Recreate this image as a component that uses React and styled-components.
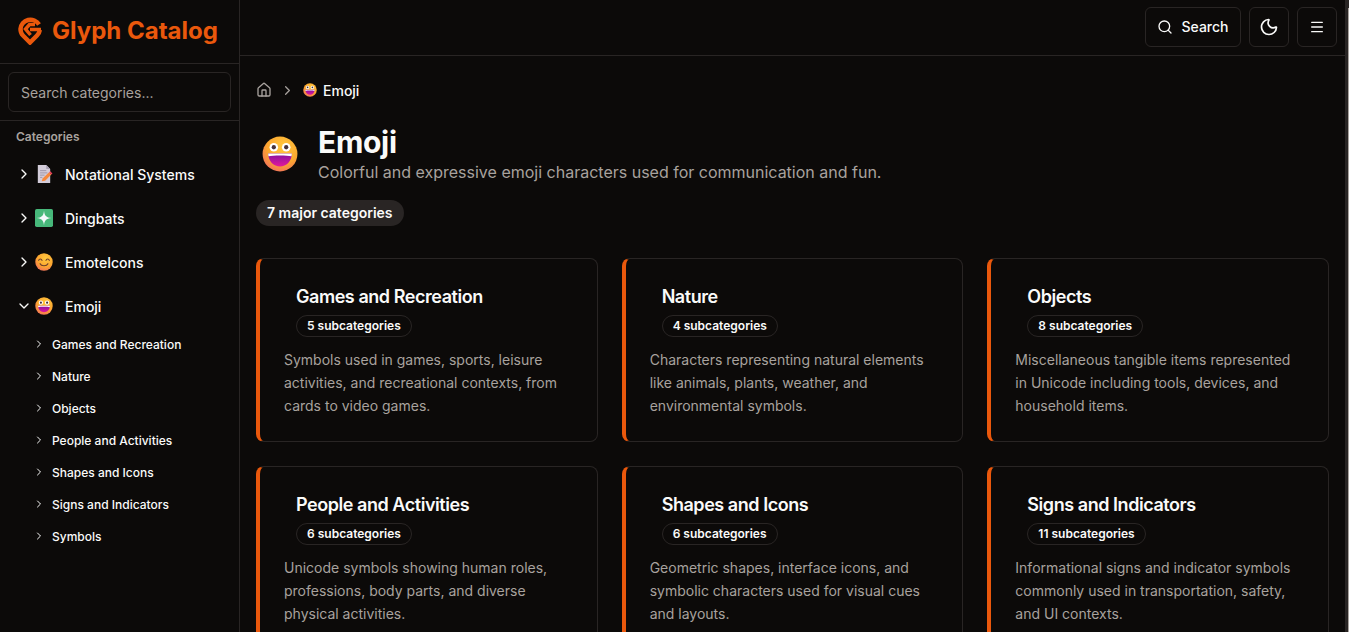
import styled, { createGlobalStyle } from "styled-components";
import { ChevronDown, ChevronRight, House, Menu, Moon, Search } from "lucide-react";

const GlobalStyle = createGlobalStyle`
  * {
    box-sizing: border-box;
  }
  html,
  body {
    margin: 0;
    height: 100%;
    background: #0c0a09;
    color: #fafaf9;
    font-family: Inter, "Liberation Sans", sans-serif;
  }
`;

const Shell = styled.div`
  display: flex;
  height: 100vh;
  overflow: hidden;
`;

const Sidebar = styled.aside`
  flex: 0 0 240px;
  border-right: 1px solid #292524;
  display: flex;
  flex-direction: column;
`;

const Brand = styled.div`
  height: 64px;
  padding: 17px 0 0 18px;
  display: flex;
  align-items: flex-start;
  gap: 10px;
  border-bottom: 1px solid #292524;
`;

const BrandName = styled.span`
  font-size: 24px;
  line-height: 28px;
  font-weight: 700;
  color: #ea580c;
`;

const FilterBox = styled.div`
  padding: 8px;
  border-bottom: 1px solid #292524;
`;

const FilterInput = styled.input`
  display: block;
  width: 100%;
  height: 40px;
  padding: 0 12px;
  background: transparent;
  border: 1px solid #292524;
  border-radius: 6px;
  font: 400 14px Inter, sans-serif;
  color: #fafaf9;
  &::placeholder {
    color: #a8a29e;
    opacity: 1;
  }
`;

const SectionLabel = styled.div`
  height: 31px;
  padding-left: 16px;
  font-size: 12px;
  font-weight: 600;
  line-height: 31px;
  color: #a8a29e;
`;

const CategoryRow = styled.div`
  height: 44px;
  padding-left: 16px;
  display: flex;
  align-items: center;
  font-size: 14px;
  font-weight: 500;
`;

const CategoryEmoji = styled.span`
  display: flex;
  margin-left: 3px;
  margin-right: 12px;
`;

const SubRow = styled.div`
  height: 32px;
  padding-left: 33px;
  display: flex;
  align-items: center;
  gap: 7px;
  font-size: 12px;
  font-weight: 500;
`;

const Main = styled.main`
  flex: 1;
  min-width: 0;
  overflow-y: auto;
`;

const ScrollRail = styled.div`
  flex: 0 0 4px;
  display: flex;
  justify-content: flex-end;
  padding-top: 8px;
  background: #292524;
`;

const ScrollThumb = styled.div`
  width: 1px;
  background: #a8a29e;
`;

const TopBar = styled.header`
  position: sticky;
  top: 0;
  height: 56px;
  padding: 7px 8px;
  display: flex;
  justify-content: flex-end;
  gap: 8px;
  background: #0c0a09;
  border-bottom: 1px solid #292524;
`;

const ToolButton = styled.button`
  height: 40px;
  width: ${(p) => (p.$wide ? "96px" : "40px")};
  padding: 0 0 1px;
  display: flex;
  align-items: center;
  justify-content: center;
  gap: 8px;
  background: transparent;
  border: 1px solid #292524;
  border-radius: 6px;
  color: #fafaf9;
  font: 500 14px Inter, sans-serif;
`;

const Content = styled.div`
  padding: 24px 16px;
`;

const Crumbs = styled.nav`
  height: 20px;
  display: flex;
  align-items: center;
  gap: 8px;
  font-size: 14px;
  font-weight: 500;
  color: #a8a29e;
`;

const CrumbCurrent = styled.span`
  display: flex;
  align-items: center;
  gap: 6px;
  color: #fafaf9;
`;

const Hero = styled.div`
  margin-top: 24px;
  display: flex;
  align-items: center;
  gap: 14px;
`;

const HeroEmoji = styled.div`
  flex: 0 0 48px;
  display: flex;
  justify-content: center;
`;

const HeroTitle = styled.h1`
  margin: 0;
  font-size: 30px;
  line-height: 36px;
  font-weight: 700;
  letter-spacing: -0.01em;
`;

const HeroText = styled.p`
  margin: 0;
  font-size: 16px;
  line-height: 24px;
  color: #a8a29e;
`;

const CountPill = styled.div`
  display: inline-block;
  margin-top: 16px;
  height: 26px;
  padding: 0 11px;
  border-radius: 13px;
  background: #292524;
  font-size: 14px;
  font-weight: 600;
  line-height: 26px;
`;

const CardGrid = styled.div`
  margin-top: 32px;
  display: grid;
  grid-template-columns: repeat(3, 1fr);
  gap: 24px;
`;

const Card = styled.article`
  padding: 24px;
  border: 1px solid #292524;
  border-left: 4px solid #ea580c;
  border-radius: 8px;
`;

const CardHead = styled.div`
  padding-left: 12px;
`;

const CardTitle = styled.h2`
  margin: 0;
  font-size: 18px;
  line-height: 28px;
  font-weight: 600;
  letter-spacing: -0.025em;
`;

const SubCount = styled.span`
  display: inline-block;
  margin-top: 4px;
  height: 22px;
  padding: 0 10px;
  border: 1px solid #292524;
  border-radius: 11px;
  font-size: 12px;
  font-weight: 600;
  line-height: 20px;
`;

const CardText = styled.p`
  margin: 11px 0 0;
  font-size: 14px;
  line-height: 23px;
  color: #a8a29e;
`;

const Logo = () => (
  <svg width="24" height="28" viewBox="0 0 24 28" fill="none" stroke="#ea580c" strokeWidth="4.5">
    <path d="M21 7.5A10 10 0 0 0 2.5 12C2.5 15 3.5 17 5 18.5L12 25.5L19 18.5C20.5 17 21.5 15.5 21.8 13" />
    <path d="M17 7.5H11.5L7.5 12L12.5 18" strokeWidth="3.5" />
    <path d="M12 12.5H23" strokeWidth="3.5" />
  </svg>
);

const GrinEmoji = ({ size, id }) => (
  <svg width={size} height={size} viewBox="0 0 32 32">
    <defs>
      <radialGradient id={id} cx="0.6" cy="0.3" r="0.85">
        <stop offset="0" stopColor="#ffc93f" />
        <stop offset="0.55" stopColor="#fca62f" />
        <stop offset="1" stopColor="#ef5f6b" />
      </radialGradient>
      <linearGradient id={`${id}m`} x1="0" y1="0" x2="0" y2="1">
        <stop offset="0" stopColor="#82109f" />
        <stop offset="1" stopColor="#e2189b" />
      </linearGradient>
    </defs>
    <circle cx="16" cy="16" r="15.5" fill={`url(#${id})`} />
    <circle cx="10.5" cy="10" r="3.8" fill="#fff" />
    <circle cx="21.5" cy="10" r="3.8" fill="#fff" />
    <circle cx="10.5" cy="10" r="1.9" fill="#46323c" />
    <circle cx="21.5" cy="10" r="1.9" fill="#46323c" />
    <path d="M5.5 15.5H26.5C26.5 22.5 21.5 27 16 27S5.5 22.5 5.5 15.5Z" fill={`url(#${id}m)`} />
    <path d="M5.5 15.5H26.5C26.5 16.5 26.4 17.2 26.2 18C22 17.2 10 17.2 5.8 18C5.6 17.2 5.5 16.5 5.5 15.5Z" fill="#fff" />
  </svg>
);

const SmileEmoji = () => (
  <svg width="18" height="18" viewBox="0 0 32 32" fill="none">
    <defs>
      <radialGradient id="smileFace" cx="0.6" cy="0.3" r="0.85">
        <stop offset="0" stopColor="#ffc93f" />
        <stop offset="0.55" stopColor="#fca62f" />
        <stop offset="1" stopColor="#ef5f6b" />
      </radialGradient>
    </defs>
    <circle cx="16" cy="16" r="15.5" fill="url(#smileFace)" />
    <path d="M6.5 13C7.5 10 11.5 10 12.5 13M19.5 13C20.5 10 24.5 10 25.5 13" stroke="#6b3d2c" strokeWidth="2" strokeLinecap="round" />
    <path d="M9 19C11 24 21 24 23 19" stroke="#6b3d2c" strokeWidth="2" strokeLinecap="round" />
  </svg>
);

const MemoEmoji = () => (
  <svg width="18" height="18" viewBox="0 0 32 32" fill="none">
    <path d="M5 0H20L27 7V32H5Z" fill="#d3ccd9" />
    <path d="M20 0L27 7H20Z" fill="#a89fb3" />
    <path d="M9 10H20M9 14H22M9 18H17M9 22H13" stroke="#9c93a6" strokeWidth="1.6" />
    <path d="M12 29L13.5 24L25 13L29 17L18 28Z" fill="#f6893c" />
    <path d="M25 13L27 11L31 15L29 17Z" fill="#ef3f5c" />
  </svg>
);

const SparkleEmoji = () => (
  <svg width="18" height="18" viewBox="0 0 32 32">
    <rect x="0" y="0" width="32" height="32" rx="3" fill="#47b87a" />
    <path d="M16 3C17 12 20 15 29 16C20 17 17 20 16 29C15 20 12 17 3 16C12 15 15 12 16 3Z" fill="#f4f8fb" />
  </svg>
);

const categories = [
  { name: "Notational Systems", icon: <MemoEmoji /> },
  { name: "Dingbats", icon: <SparkleEmoji /> },
  { name: "EmoteIcons", icon: <SmileEmoji /> },
  { name: "Emoji", icon: <GrinEmoji size={18} id="grinSide" />, open: true },
];

const subcategories = [
  "Games and Recreation",
  "Nature",
  "Objects",
  "People and Activities",
  "Shapes and Icons",
  "Signs and Indicators",
  "Symbols",
];

const cards = [
  { title: "Games and Recreation", count: "5 subcategories", text: "Symbols used in games, sports, leisure activities, and recreational contexts, from cards to video games." },
  { title: "Nature", count: "4 subcategories", text: "Characters representing natural elements like animals, plants, weather, and environmental symbols." },
  { title: "Objects", count: "8 subcategories", text: "Miscellaneous tangible items represented in Unicode including tools, devices, and household items." },
  { title: "People and Activities", count: "6 subcategories", text: "Unicode symbols showing human roles, professions, body parts, and diverse physical activities." },
  { title: "Shapes and Icons", count: "6 subcategories", text: "Geometric shapes, interface icons, and symbolic characters used for visual cues and layouts." },
  { title: "Signs and Indicators", count: "11 subcategories", text: "Informational signs and indicator symbols commonly used in transportation, safety, and UI contexts." },
];

export default function App() {
  return (
    <Shell>
      <GlobalStyle />
      <Sidebar>
        <Brand>
          <Logo />
          <BrandName>Glyph Catalog</BrandName>
        </Brand>
        <FilterBox>
          <FilterInput placeholder="Search categories..." />
        </FilterBox>
        <SectionLabel>Categories</SectionLabel>
        {categories.map((cat) => (
          <CategoryRow key={cat.name}>
            {cat.open ? <ChevronDown size={16} /> : <ChevronRight size={16} />}
            <CategoryEmoji>{cat.icon}</CategoryEmoji>
            {cat.name}
          </CategoryRow>
        ))}
        {subcategories.map((name) => (
          <SubRow key={name}>
            <ChevronRight size={12} />
            {name}
          </SubRow>
        ))}
      </Sidebar>
      <Main>
        <TopBar>
          <ToolButton $wide>
            <Search size={16} />
            Search
          </ToolButton>
          <ToolButton>
            <Moon size={20} />
          </ToolButton>
          <ToolButton>
            <Menu size={16} />
          </ToolButton>
        </TopBar>
        <Content>
          <Crumbs>
            <House size={16} />
            <ChevronRight size={15} />
            <CrumbCurrent>
              <GrinEmoji size={14} id="grinCrumb" />
              Emoji
            </CrumbCurrent>
          </Crumbs>
          <Hero>
            <HeroEmoji>
              <GrinEmoji size={36} id="grinHero" />
            </HeroEmoji>
            <div>
              <HeroTitle>Emoji</HeroTitle>
              <HeroText>Colorful and expressive emoji characters used for communication and fun.</HeroText>
            </div>
          </Hero>
          <CountPill>7 major categories</CountPill>
          <CardGrid>
            {cards.map((card) => (
              <Card key={card.title}>
                <CardHead>
                  <CardTitle>{card.title}</CardTitle>
                  <SubCount>{card.count}</SubCount>
                </CardHead>
                <CardText>{card.text}</CardText>
              </Card>
            ))}
          </CardGrid>
        </Content>
      </Main>
      <ScrollRail>
        <ScrollThumb />
      </ScrollRail>
    </Shell>
  );
}
